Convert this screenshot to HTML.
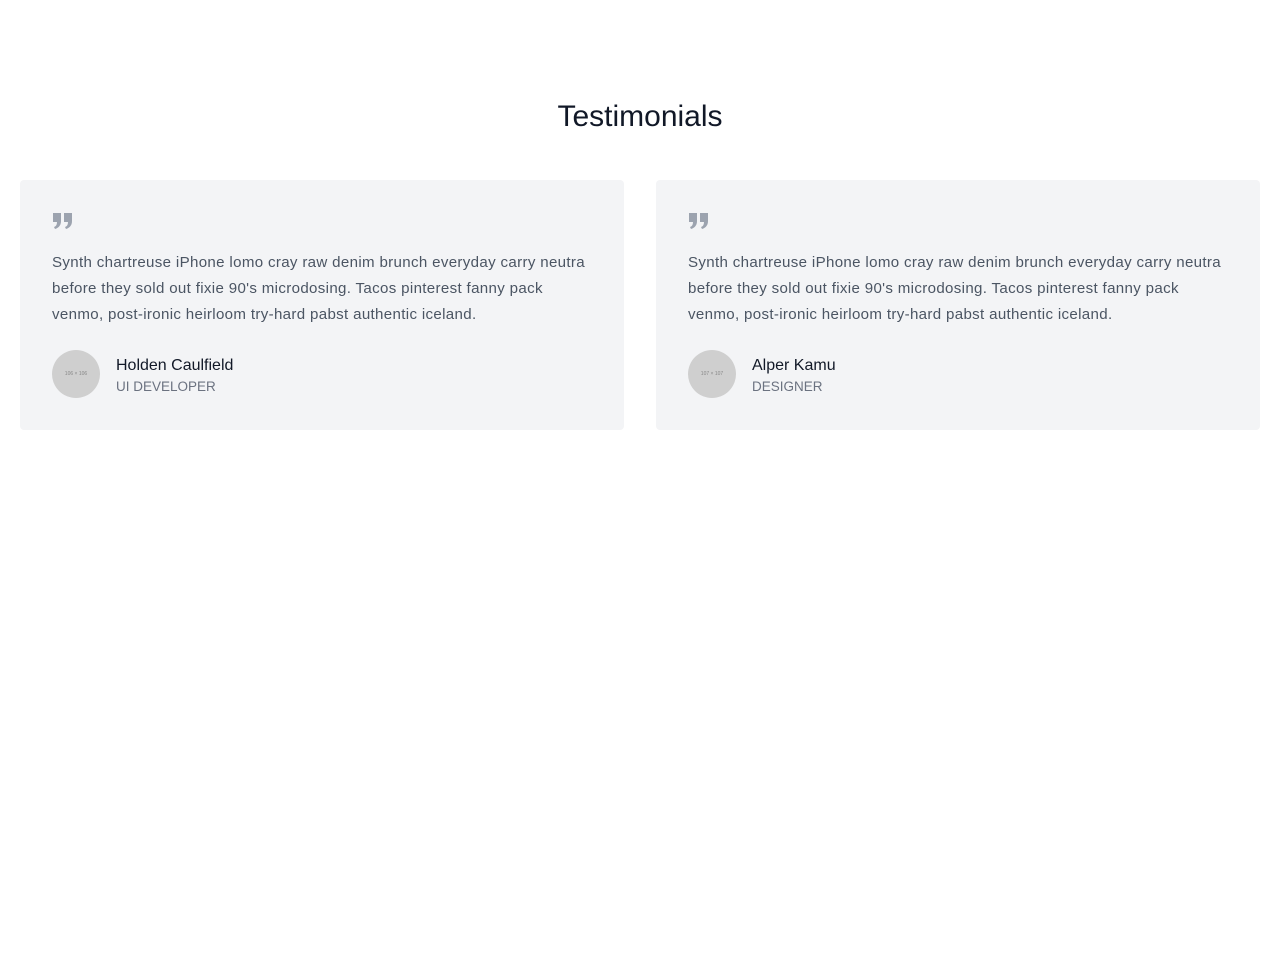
<!DOCTYPE html>
<html><head><meta charset="utf-8"><style>
body{margin:0;background:#fff;font-family:"Liberation Sans",sans-serif;}
h1{margin:0;position:absolute;top:100px;left:0;width:1280px;text-align:center;font-size:30px;font-weight:500;color:#111827;}
.card{position:absolute;top:180px;width:604px;height:250px;background:#f3f4f6;border-radius:4px;}
.q{position:absolute;left:32px;top:32px;}
.t{position:absolute;left:32px;top:70px;width:538px;font-size:15.1px;letter-spacing:0.33px;line-height:26px;color:#4b5563;}
.av{position:absolute;left:32px;top:170px;width:48px;height:48px;border-radius:50%;background:#cfcfcf;color:#888;font-size:5px;text-align:center;line-height:48px;}
.n{position:absolute;left:96px;top:177px;font-size:16px;color:#111827;}
.r{position:absolute;left:96px;top:199px;font-size:13.5px;color:#6b7280;}
</style></head><body>
<h1>Testimonials</h1>
<div class="card" style="left:20px">
<svg class="q" width="21" height="18" viewBox="0 0 21 18"><path fill="#9ca3af" d="M1 1h8v8q0 6-6 8l-1-2q3-1 3-5H1z M12 1h8v8q0 6-6 8l-1-2q3-1 3-5h-4z"/></svg>
<div class="t">Synth chartreuse iPhone lomo cray raw denim brunch everyday carry neutra before they sold out fixie 90's microdosing. Tacos pinterest fanny pack venmo, post-ironic heirloom try-hard pabst authentic iceland.</div>
<div class="av">106 × 106</div><div class="n">Holden Caulfield</div><div class="r">UI DEVELOPER</div>
</div>
<div class="card" style="left:656px">
<svg class="q" width="21" height="18" viewBox="0 0 21 18"><path fill="#9ca3af" d="M1 1h8v8q0 6-6 8l-1-2q3-1 3-5H1z M12 1h8v8q0 6-6 8l-1-2q3-1 3-5h-4z"/></svg>
<div class="t">Synth chartreuse iPhone lomo cray raw denim brunch everyday carry neutra before they sold out fixie 90's microdosing. Tacos pinterest fanny pack venmo, post-ironic heirloom try-hard pabst authentic iceland.</div>
<div class="av">107 × 107</div><div class="n">Alper Kamu</div><div class="r">DESIGNER</div>
</div>
</body></html>
